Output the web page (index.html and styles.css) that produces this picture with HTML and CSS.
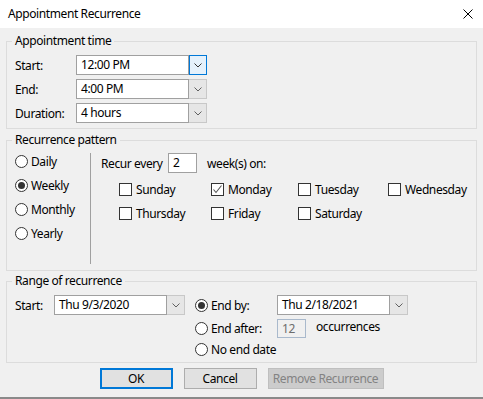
FILE: index.html
```html
<!DOCTYPE html>
<html lang="en">
<head>
    <meta charset="UTF-8">
    <title>Appointment Recurrence</title>
    <link rel="stylesheet" href="styles.css">
</head>
<body>

    <div class="dialog">
        <!-- Title bar -->
        <div class="titlebar">
            <span class="title">Appointment Recurrence</span>
            <span class="close">
                <svg width="10" height="10" viewBox="0 0 10 10"><path d="M0.5 0.5 L9.5 9.5 M9.5 0.5 L0.5 9.5" stroke="#000" stroke-width="1" fill="none"/></svg>
            </span>
        </div>

        <div class="content">
            <!-- Appointment time -->
            <fieldset class="group group-time">
                <legend>Appointment time</legend>
                <div class="field-row">
                    <span class="field-label">Start:</span>
                    <div class="combo focused">
                        <div class="combo-text">12:00 PM</div>
                        <div class="combo-btn"><svg width="8" height="5" viewBox="0 0 8 5"><polyline points="0.5,0.5 4,4 7.5,0.5" fill="none" stroke="#333" stroke-width="1"/></svg></div>
                    </div>
                </div>
                <div class="field-row">
                    <span class="field-label">End:</span>
                    <div class="combo">
                        <div class="combo-text">4:00 PM</div>
                        <div class="combo-btn"><svg width="8" height="5" viewBox="0 0 8 5"><polyline points="0.5,0.5 4,4 7.5,0.5" fill="none" stroke="#606060" stroke-width="1"/></svg></div>
                    </div>
                </div>
                <div class="field-row">
                    <span class="field-label">Duration:</span>
                    <div class="combo">
                        <div class="combo-text">4 hours</div>
                        <div class="combo-btn"><svg width="8" height="5" viewBox="0 0 8 5"><polyline points="0.5,0.5 4,4 7.5,0.5" fill="none" stroke="#606060" stroke-width="1"/></svg></div>
                    </div>
                </div>
            </fieldset>

            <!-- Recurrence pattern -->
            <fieldset class="group group-pattern">
                <legend>Recurrence pattern</legend>
                <div class="pattern">
                    <div class="pattern-types">
                        <div class="radio-row"><span class="radio"></span>Daily</div>
                        <div class="radio-row"><span class="radio checked"></span>Weekly</div>
                        <div class="radio-row"><span class="radio"></span>Monthly</div>
                        <div class="radio-row"><span class="radio"></span>Yearly</div>
                    </div>
                    <div class="pattern-detail">
                        <div class="recur-row">
                            <span class="recur-label">Recur every</span>
                            <div class="textbox small">2</div>
                            <span class="recur-unit">week(s) on:</span>
                        </div>
                        <div class="days">
                            <div class="check-row"><span class="checkbox"></span>Sunday</div>
                            <div class="check-row"><span class="checkbox checked"><svg width="11" height="11" viewBox="0 0 11 11"><polyline points="1.5,5.5 4,8.5 9.5,1.5" fill="none" stroke="#555" stroke-width="1.1"/></svg></span>Monday</div>
                            <div class="check-row"><span class="checkbox"></span>Tuesday</div>
                            <div class="check-row"><span class="checkbox"></span>Wednesday</div>
                            <div class="check-row"><span class="checkbox"></span>Thursday</div>
                            <div class="check-row"><span class="checkbox"></span>Friday</div>
                            <div class="check-row"><span class="checkbox"></span>Saturday</div>
                        </div>
                    </div>
                </div>
            </fieldset>

            <!-- Range of recurrence -->
            <fieldset class="group group-range">
                <legend>Range of recurrence</legend>
                <div class="range">
                    <div class="range-start">
                        <span class="range-label">Start:</span>
                        <div class="combo">
                            <div class="combo-text">Thu 9/3/2020</div>
                            <div class="combo-btn"><svg width="8" height="5" viewBox="0 0 8 5"><polyline points="0.5,0.5 4,4 7.5,0.5" fill="none" stroke="#606060" stroke-width="1"/></svg></div>
                        </div>
                    </div>
                    <div class="range-end">
                        <div class="end-row">
                            <div class="radio-row end-option"><span class="radio checked"></span>End by:</div>
                            <div class="combo">
                                <div class="combo-text">Thu 2/18/2021</div>
                                <div class="combo-btn"><svg width="8" height="5" viewBox="0 0 8 5"><polyline points="0.5,0.5 4,4 7.5,0.5" fill="none" stroke="#606060" stroke-width="1"/></svg></div>
                            </div>
                        </div>
                        <div class="end-row">
                            <div class="radio-row end-option"><span class="radio"></span>End after:</div>
                            <div class="textbox disabled">12</div>
                            <span class="occ-label">occurrences</span>
                        </div>
                        <div class="end-row short">
                            <div class="radio-row end-option"><span class="radio"></span>No end date</div>
                        </div>
                    </div>
                </div>
            </fieldset>

            <!-- Buttons -->
            <div class="buttons">
                <button class="btn default">OK</button>
                <button class="btn">Cancel</button>
                <button class="btn wide" disabled>Remove Recurrence</button>
            </div>
        </div>
    </div>

</body>
</html>
```

FILE: styles.css
```css
* {
    box-sizing: border-box;
}

body {
    margin: 0;
    background: #f0f0f0;
    font-family: 'Noto Sans', 'Open Sans', sans-serif;
    font-size: 12px;
    letter-spacing: -0.4px;
    color: #000;
}

.dialog {
    width: 483px;
    height: 399px;
    background: #f0f0f0;
    border-bottom: 2px solid #8a8a8a;
}

/* Title bar */
.titlebar {
    height: 28px;
    background: #fff;
    display: flex;
    align-items: center;
    justify-content: space-between;
    padding: 0 10px 0 8px;
}

.title {
    font-size: 12px;
    line-height: 16px;
}

.close {
    display: flex;
}

/* Group boxes */
.content {
    padding: 0 6px;
}

.group {
    margin: 0;
    border: 1px solid #dcdcdc;
    padding: 0 8px;
    min-width: 0;
}

.group legend {
    padding: 0 3px;
    margin-left: -3px;
    line-height: 16px;
}

.group-time {
    margin-top: 5px;
    padding-top: 6px;
    padding-bottom: 5px;
}

.group-pattern {
    margin-top: 3px;
    padding-top: 5px;
    padding-bottom: 6px;
}

.group-range {
    margin-top: 2px;
    padding-top: 6px;
    padding-bottom: 5px;
}

/* Appointment time */
.field-row {
    display: flex;
    align-items: center;
    height: 20px;
    margin-bottom: 4px;
}

.field-row:last-child {
    margin-bottom: 0;
}

.field-label {
    width: 61px;
}

.combo {
    display: flex;
    height: 20px;
}

.combo-text {
    width: 113px;
    height: 20px;
    background: #fff;
    border: 1px solid #a0a0a0;
    padding-left: 4px;
    line-height: 18px;
    white-space: nowrap;
}

.combo-btn {
    width: 18px;
    height: 20px;
    border: 1px solid #c8c8c8;
    border-left: none;
    background: #e6e6e6;
    display: flex;
    align-items: center;
    justify-content: center;
}

.combo.focused .combo-btn {
    border: 1px solid #0078d7;
    background: #e5f1fb;
}

/* Radios and checkboxes */
.radio-row,
.check-row {
    display: flex;
    align-items: center;
    height: 16px;
    white-space: nowrap;
}

.radio {
    width: 13px;
    height: 13px;
    border: 1px solid #333;
    border-radius: 50%;
    background: #fff;
    margin-right: 3px;
    display: flex;
    align-items: center;
    justify-content: center;
    flex-shrink: 0;
}

.radio.checked::after {
    content: "";
    width: 7px;
    height: 7px;
    border-radius: 50%;
    background: #333;
}

.checkbox {
    width: 13px;
    height: 13px;
    border: 1px solid #333;
    background: #fff;
    margin-right: 4px;
    display: flex;
    align-items: center;
    justify-content: center;
    flex-shrink: 0;
}

/* Recurrence pattern */
.pattern {
    display: flex;
}

.pattern-types {
    width: 75px;
    height: 111px;
    display: flex;
    flex-direction: column;
    gap: 8px;
}

.pattern-detail {
    flex: 1;
    border-left: 1px solid #a0a0a0;
    padding-left: 10px;
}

.recur-row {
    display: flex;
    align-items: center;
    height: 20px;
}

.recur-label {
    width: 67px;
}

.recur-unit {
    margin-left: 10px;
}

.textbox {
    height: 20px;
    border: 1px solid #a0a0a0;
    background: #fff;
    padding-left: 4px;
    line-height: 18px;
}

.textbox.small {
    width: 29px;
}

.textbox.disabled {
    width: 29px;
    height: 19px;
    line-height: 17px;
    background: #f0f0f0;
    border-color: #a9b9cc;
    color: #6d6d6d;
}

.days {
    display: grid;
    grid-template-columns: 92px 87px 90px auto;
    row-gap: 8px;
    margin-top: 8px;
    margin-left: 18px;
}

/* Range of recurrence */
.range {
    display: flex;
    align-items: flex-start;
}

.range-start {
    display: flex;
    align-items: center;
}

.range-label {
    width: 39px;
}

.range-end {
    margin-left: 10px;
    display: flex;
    flex-direction: column;
    gap: 3px;
}

.end-row {
    display: flex;
    align-items: center;
    height: 20px;
}

.end-row.short {
    height: 16px;
}

.end-option {
    width: 82px;
}

.occ-label {
    margin-left: 10px;
    margin-top: -4px;
}

/* Buttons */
.buttons {
    display: flex;
    justify-content: center;
    gap: 11px;
    margin-top: 5px;
}

.btn {
    width: 73px;
    height: 21px;
    font-family: inherit;
    font-size: 12px;
    letter-spacing: inherit;
    color: #000;
    background: #e1e1e1;
    border: 1px solid #adadad;
    padding: 0;
}

.btn.default {
    border: 2px solid #0078d7;
}

.btn.wide {
    width: 116px;
}

.btn:disabled {
    background: #cccccc;
    border-color: #bfbfbf;
    color: #838383;
}
```
